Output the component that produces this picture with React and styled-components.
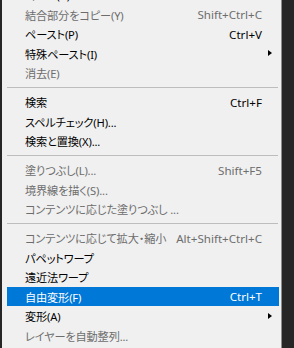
import React from 'react';
import styled, { createGlobalStyle } from 'styled-components';

const GlobalStyle = createGlobalStyle`
  html, body {
    margin: 0;
    padding: 0;
    height: 348px;
    overflow: hidden;
    background: #262626;
  }
  body {
    font-family: "Noto Sans", "Noto Sans CJK JP", sans-serif;
  }
`;

const Screen = styled.div`
  display: flex;
  height: 348px;
  overflow: hidden;
  background: #262626;
`;

const Menu = styled.div`
  margin-left: 2px;
  width: 279px;
  height: 348px;
  overflow: hidden;
  background: #f0f0f0;
  border-right: 1px solid #8e8e8e;
`;

const List = styled.ul`
  list-style: none;
  margin: -14.75px 0 0;
  padding: 0;
`;

const Row = styled.li`
  display: flex;
  align-items: center;
  height: 19.5px;
  margin: 0 2px 0 5px;
  padding: 0 17px 0 18px;
  font-size: 11.2px;
  font-feature-settings: "palt";
  white-space: nowrap;
  color: ${(p) => (p.$active ? '#ffffff' : p.$disabled ? '#6d6d6d' : '#000000')};
  background: ${(p) => (p.$active ? '#0078d7' : 'transparent')};
  position: relative;
`;

const Label = styled.span`
  flex: 1;
  letter-spacing: -0.15px;
`;

const Shortcut = styled.span`
  margin-left: 4px;
  font-size: 11.6px;
`;

const Arrow = styled.span`
  position: absolute;
  right: 7px;
  top: 50%;
  margin-top: -3.5px;
  width: 0;
  height: 0;
  border-top: 3.5px solid transparent;
  border-bottom: 3.5px solid transparent;
  border-left: 4px solid #000;
`;

const Separator = styled.li`
  height: 9.5px;
  margin: 0 3px 0 5px;
  display: flex;
  align-items: center;

  &::after {
    content: '';
    flex: 1;
    height: 1px;
    background: #bdbdbd;
  }
`;

const items = [
  { label: 'コピー(C)', shortcut: 'Ctrl+C' },
  { label: '結合部分をコピー(Y)', shortcut: 'Shift+Ctrl+C', disabled: true },
  { label: 'ペースト(P)', shortcut: 'Ctrl+V' },
  { label: '特殊ペースト(I)', submenu: true },
  { label: '消去(E)', disabled: true },
  'sep',
  { label: '検索', shortcut: 'Ctrl+F' },
  { label: 'スペルチェック(H)...' },
  { label: '検索と置換(X)...' },
  'sep',
  { label: '塗りつぶし(L)...', shortcut: 'Shift+F5', disabled: true },
  { label: '境界線を描く(S)...', disabled: true },
  { label: 'コンテンツに応じた塗りつぶし ...', disabled: true },
  'sep',
  { label: 'コンテンツに応じて拡大・縮小', shortcut: 'Alt+Shift+Ctrl+C', disabled: true },
  { label: 'パペットワープ' },
  { label: '遠近法ワープ' },
  { label: '自由変形(F)', shortcut: 'Ctrl+T', active: true },
  { label: '変形(A)', submenu: true },
  { label: 'レイヤーを自動整列...', disabled: true },
  { label: 'レイヤーを自動合成...', disabled: true },
];

export default function App() {
  return (
    <>
      <GlobalStyle />
      <Screen>
        <Menu>
          <List>
            {items.map((it, i) =>
              it === 'sep' ? (
                <Separator key={i} />
              ) : (
                <Row key={i} $disabled={it.disabled} $active={it.active}>
                  <Label>{it.label}</Label>
                  {it.shortcut && <Shortcut>{it.shortcut}</Shortcut>}
                  {it.submenu && <Arrow />}
                </Row>
              )
            )}
          </List>
        </Menu>
      </Screen>
    </>
  );
}
